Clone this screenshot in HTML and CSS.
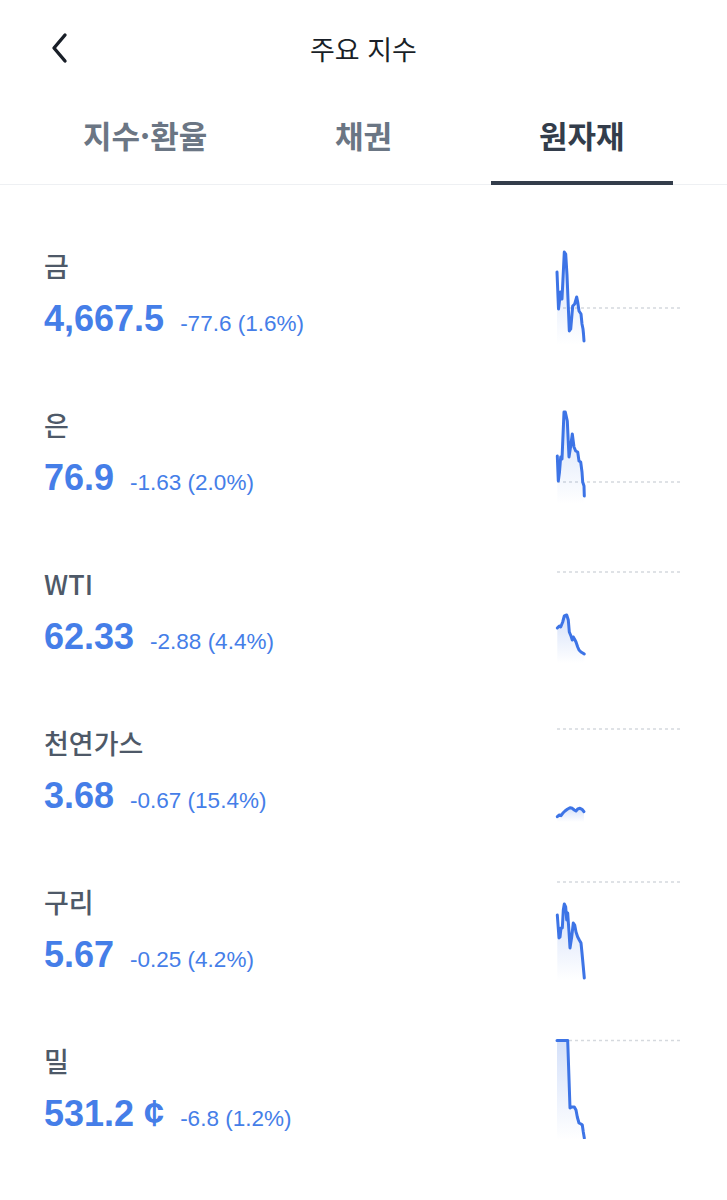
FILE: index.html
```html
<!DOCTYPE html>
<html lang="ko">
<head>
    <meta charset="UTF-8">
    <meta name="viewport" content="width=device-width, initial-scale=1.0">
    <title>주요 지수</title>
    <link rel="stylesheet" href="styles.css">
</head>
<body>

    <svg class="defs" width="0" height="0">
        <defs>
            <linearGradient id="areaFill" x1="0" y1="0" x2="0" y2="1">
                <stop offset="0" stop-color="#3d74e6" stop-opacity="0.22"/>
                <stop offset="1" stop-color="#3d74e6" stop-opacity="0"/>
            </linearGradient>
        </defs>
    </svg>

    <header class="top-bar">
        <button class="back-button" aria-label="뒤로">
            <svg viewBox="0 0 24 32" width="24" height="32">
                <path d="M17 3L6 16l11 13" fill="none" stroke="#191f28" stroke-width="3.4" stroke-linecap="round" stroke-linejoin="round"/>
            </svg>
        </button>
        <h1 class="page-title">주요 지수</h1>
        <div></div>
    </header>

    <nav class="tabs">
        <div class="tab">지수·환율</div>
        <div class="tab">채권</div>
        <div class="tab active">원자재</div>
    </nav>

    <ul class="quote-list">
        <li class="quote">
            <div class="quote-info">
                <div class="name">금</div>
                <div class="figures">
                    <span class="price">4,667.5</span>
                    <span class="change">-77.6 (1.6%)</span>
                </div>
            </div>
            <svg class="spark" viewBox="0 0 126 100" width="126" height="100">
                <line class="base" x1="0" y1="63" x2="126" y2="63"/>
                <path class="area" d="M0,27 L1.5,64 L2,60 L3.5,47 L5,54 L7.3,7 L8.7,9 L10,30 L12.3,86 L13.7,84 L15.7,61 L17.7,59 L19.7,52 L20.7,57 L22,66 L24,69 L25,79 L26,84 L26.5,89 L27,96 L27,100 L0,100 Z"/>
                <path class="line" d="M0,27 L1.5,64 L2,60 L3.5,47 L5,54 L7.3,7 L8.7,9 L10,30 L12.3,86 L13.7,84 L15.7,61 L17.7,59 L19.7,52 L20.7,57 L22,66 L24,69 L25,79 L26,84 L26.5,89 L27,96"/>
            </svg>
        </li>
        <li class="quote">
            <div class="quote-info">
                <div class="name">은</div>
                <div class="figures">
                    <span class="price">76.9</span>
                    <span class="change">-1.63 (2.0%)</span>
                </div>
            </div>
            <svg class="spark" viewBox="0 0 126 100" width="126" height="100">
                <line class="base" x1="0" y1="78" x2="126" y2="78"/>
                <path class="area" d="M0.3,52 L1.3,77 L2.5,68 L3.7,53 L5,55 L7,8 L8.3,8 L10.3,17 L12,53 L13.7,42 L15.3,30 L17,43 L18.7,47 L20.7,48 L22,57 L23.7,58 L25,68 L25.7,78 L27,82 L27.3,92 L27.3,100 L0.3,100 Z"/>
                <path class="line" d="M0.3,52 L1.3,77 L2.5,68 L3.7,53 L5,55 L7,8 L8.3,8 L10.3,17 L12,53 L13.7,42 L15.3,30 L17,43 L18.7,47 L20.7,48 L22,57 L23.7,58 L25,68 L25.7,78 L27,82 L27.3,92"/>
            </svg>
        </li>
        <li class="quote">
            <div class="quote-info">
                <div class="name">WTI</div>
                <div class="figures">
                    <span class="price">62.33</span>
                    <span class="change">-2.88 (4.4%)</span>
                </div>
            </div>
            <svg class="spark" viewBox="0 0 126 100" width="126" height="100">
                <line class="base" x1="0" y1="9" x2="126" y2="9"/>
                <path class="area" d="M0.3,65 L2.3,63 L3.7,64 L5.7,59 L7.3,53 L9.7,52 L11.3,57 L12.3,69 L14,73 L15.3,77 L16.3,74 L18,77 L19,79 L20.7,84 L22,87 L24,89 L25.7,90 L27.3,91 L27.3,100 L0.3,100 Z"/>
                <path class="line" d="M0.3,65 L2.3,63 L3.7,64 L5.7,59 L7.3,53 L9.7,52 L11.3,57 L12.3,69 L14,73 L15.3,77 L16.3,74 L18,77 L19,79 L20.7,84 L22,87 L24,89 L25.7,90 L27.3,91"/>
            </svg>
        </li>
        <li class="quote">
            <div class="quote-info">
                <div class="name">천연가스</div>
                <div class="figures">
                    <span class="price">3.68</span>
                    <span class="change">-0.67 (15.4%)</span>
                </div>
            </div>
            <svg class="spark" viewBox="0 0 126 100" width="126" height="100">
                <line class="base" x1="0" y1="7" x2="126" y2="7"/>
                <path class="area" d="M0.3,94.7 L2.3,93 L4,93.7 L5.7,91.3 L8,89 L10.3,87.3 L13,85.7 L15.3,86.3 L17.3,88 L19,89 L20.7,87 L23,86.3 L25,87.3 L27,89.7 L27,100 L0.3,100 Z"/>
                <path class="line" d="M0.3,94.7 L2.3,93 L4,93.7 L5.7,91.3 L8,89 L10.3,87.3 L13,85.7 L15.3,86.3 L17.3,88 L19,89 L20.7,87 L23,86.3 L25,87.3 L27,89.7"/>
            </svg>
        </li>
        <li class="quote">
            <div class="quote-info">
                <div class="name">구리</div>
                <div class="figures">
                    <span class="price">5.67</span>
                    <span class="change">-0.25 (4.2%)</span>
                </div>
            </div>
            <svg class="spark" viewBox="0 0 126 100" width="126" height="100">
                <line class="base" x1="0" y1="1" x2="126" y2="1"/>
                <path class="area" d="M0.3,34 L2,57 L3,56 L4,47 L5.3,47 L6.3,29 L7.3,23 L8.7,26 L9.7,39 L10.7,32 L12,51 L13,67 L14.7,56 L16.3,42 L17.7,44 L19,51 L20.7,56 L22.3,59 L24,62 L25,72 L26.3,86 L27.3,97 L27.3,100 L0.3,100 Z"/>
                <path class="line" d="M0.3,34 L2,57 L3,56 L4,47 L5.3,47 L6.3,29 L7.3,23 L8.7,26 L9.7,39 L10.7,32 L12,51 L13,67 L14.7,56 L16.3,42 L17.7,44 L19,51 L20.7,56 L22.3,59 L24,62 L25,72 L26.3,86 L27.3,97"/>
            </svg>
        </li>
        <li class="quote">
            <div class="quote-info">
                <div class="name">밀</div>
                <div class="figures">
                    <span class="price">531.2 ¢</span>
                    <span class="change">-6.8 (1.2%)</span>
                </div>
            </div>
            <svg class="spark" viewBox="0 0 126 100" width="126" height="100">
                <line class="base" x1="0" y1="0.5" x2="126" y2="0.5"/>
                <path class="area" d="M0,0.5 L10.7,0.5 L13,68 L14.7,67 L17.3,67 L19,70 L20.3,77 L22,83 L24,84 L25.3,85 L26.3,92 L27.3,98 L27.3,100 L0,100 Z"/>
                <path class="line" d="M0,0.5 L10.7,0.5 L13,68 L14.7,67 L17.3,67 L19,70 L20.3,77 L22,83 L24,84 L25.3,85 L26.3,92 L27.3,98"/>
            </svg>
        </li>
    </ul>

</body>
</html>
```

FILE: styles.css
```css
body {
    font-family: "Liberation Sans", "Noto Sans CJK KR", sans-serif;
    margin: 0;
    background-color: #fff;
    color: #191f28;
}

.defs {
    display: block;
    width: 0;
    height: 0;
}

.top-bar {
    display: grid;
    grid-template-columns: 1fr auto 1fr;
    align-items: center;
    height: 96px;
    padding: 0 44px;
}

.back-button {
    justify-self: start;
    display: flex;
    background: none;
    border: none;
    padding: 0;
    margin-left: 4px;
    cursor: pointer;
}

.page-title {
    margin: 0;
    font-family: "Noto Sans CJK KR", sans-serif;
    font-size: 27px;
    font-weight: 400;
    color: #191f28;
}

.tabs {
    display: flex;
    padding: 0 36px;
    border-bottom: 1px solid #eef0f3;
}

.tab {
    flex: 1;
    margin: 0 18px -1px;
    height: 89px;
    display: flex;
    justify-content: center;
    align-items: center;
    font-family: "Noto Sans CJK KR", sans-serif;
    font-size: 31px;
    font-weight: 600;
    color: #6b7684;
    border-bottom: 4px solid transparent;
    box-sizing: border-box;
    padding-bottom: 8px;
}

.tab.active {
    color: #333d4b;
    border-bottom-color: #333d4b;
}

.quote-list {
    list-style: none;
    margin: 0;
    padding: 0;
}

.quote {
    display: flex;
    align-items: flex-start;
    height: 159px;
    padding: 60px 44px 0;
    box-sizing: border-box;
}

.quote-info {
    flex: 1;
    padding-top: 3px;
}

.name {
    font-family: "Noto Sans CJK KR", sans-serif;
    font-size: 27px;
    line-height: 36px;
    font-weight: 500;
    color: #4e5968;
}

.figures {
    display: flex;
    align-items: baseline;
    gap: 16px;
    margin-top: 15px;
    color: #457ee8;
}

.price {
    font-size: 36px;
    line-height: 40px;
    font-weight: 700;
}

.change {
    font-size: 22.5px;
}

.spark {
    flex: none;
    overflow: visible;
}

.spark .base {
    stroke: #d5d9de;
    stroke-width: 1.5;
    stroke-dasharray: 3 3;
}

.spark .area {
    fill: url(#areaFill);
}

.spark .line {
    fill: none;
    stroke: #3d74e6;
    stroke-width: 3;
    stroke-linejoin: round;
    stroke-linecap: round;
}
```
